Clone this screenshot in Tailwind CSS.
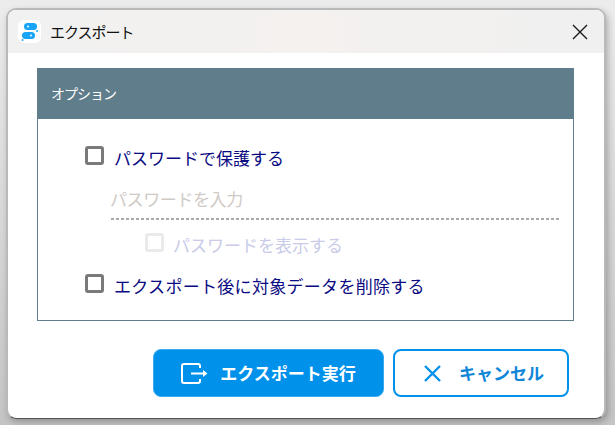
<!DOCTYPE html>
<html lang="ja">
<head>
    <meta charset="UTF-8">
    <title>エクスポート</title>
    <script src="https://cdn.jsdelivr.net/npm/@tailwindcss/browser@4"></script>
</head>
<body class="bg-[#e4e4e4] font-['Noto_Sans_CJK_JP',sans-serif] overflow-hidden">
    <div class="w-[615px] h-[425px] pt-[8px] pl-[6px] bg-gradient-to-b from-[#ececec] to-[#c4c4c4]">
        <div class="w-[600px] h-[411px] flex flex-col bg-white rounded-[10px] overflow-hidden border-2 border-[#b9b9b9] border-b-[#555] border-b-1 shadow-[2px_3px_6px_rgba(0,0,0,0.25)]">
            <header class="h-[43px] shrink-0 flex items-center bg-gradient-to-r from-[#f1f1f1] via-[#f4f1ef] to-[#f0f0f0] pl-[10px] pr-[16px]">
                <div class="w-[23px] h-[23px] rounded-[6px] bg-white flex items-center justify-center">
                    <svg width="17" height="19" viewBox="0 0 17 19">
                        <rect x="3" y="1" width="13" height="7" rx="3.5" fill="#18a5f7"/>
                        <rect x="1" y="10" width="13" height="7" rx="3.5" fill="#18a5f7"/>
                        <circle cx="7" cy="4.5" r="1" fill="#fff"/>
                        <circle cx="10" cy="13.5" r="1" fill="#fff"/>
                        <circle cx="16" cy="9" r="1" fill="#18a5f7"/>
                        <circle cx="1.5" cy="18" r="1" fill="#18a5f7"/>
                    </svg>
                </div>
                <span class="ml-[9px] text-[15px] tracking-[-1px] text-[#111] leading-none">エクスポート</span>
                <svg class="ml-auto" width="16" height="16" viewBox="0 0 16 16">
                    <path d="M1 1 L15 15 M15 1 L1 15" stroke="#1a1a1a" stroke-width="1.4" fill="none"/>
                </svg>
            </header>

            <main class="flex-1 flex flex-col pl-[29px] pr-[29px] pt-[15px]">
                <section class="w-[537px] h-[253px] border border-[#5f7d8b] border-t-0 flex flex-col">
                    <div class="h-[51px] -mx-px bg-[#5f7d8b] text-white text-[14px] tracking-[-1px] flex items-center pl-[14px]">オプション</div>
                    <div class="flex flex-col pl-[47px] pr-[12px] pt-[25px]">
                        <label class="flex items-center h-[28px] text-[17px] text-[#0a0a82]">
                            <span class="w-[19px] h-[19px] mb-[6px] rounded-[3px] border-[3px] border-[#7a7a7a] bg-white"></span>
                            <span class="ml-[10px]">パスワードで保護する</span>
                        </label>
                        <div class="ml-[26px] mt-[12px] h-[30px] flex items-center text-[17px] tracking-[-0.4px] text-[#cfcac6]"><span class="-ml-px">パスワードを入力</span></div>
                        <div class="ml-[26px] mt-[4px] h-[2px] bg-[repeating-linear-gradient(90deg,#aaa_0,#aaa_3px,transparent_3px,transparent_5px)]"></div>
                        <label class="flex items-center h-[28px] mt-[11px] ml-[60px] text-[17px] text-[#c9cbe8]">
                            <span class="w-[19px] h-[19px] mb-[6px] rounded-[3px] border-[3px] border-[#eaeaea] bg-white"></span>
                            <span class="ml-[9px]">パスワードを表示する</span>
                        </label>
                        <label class="flex items-center h-[28px] mt-[13px] text-[17px] text-[#0a0a82]">
                            <span class="w-[19px] h-[19px] mb-[6px] rounded-[3px] border-[3px] border-[#7a7a7a] bg-white"></span>
                            <span class="ml-[10px] tracking-[0.3px]">エクスポート後に対象データを削除する</span>
                        </label>
                    </div>
                </section>

                <div class="flex justify-end gap-[9px] mt-[28px] mr-[6px]">
                    <button class="w-[231px] h-[48px] rounded-[8px] bg-[#0091ea] border border-[#3aa9f0] text-white text-[17px] font-semibold flex items-center justify-center gap-[12px]">
                        <svg width="27" height="21" viewBox="0 0 27 21" fill="none" stroke="#fff" stroke-width="2">
                            <path d="M19 5 V3 Q19 1 17 1 H3 Q1 1 1 3 V18 Q1 20 3 20 H17 Q19 20 19 18 V16"/>
                            <path d="M10 10.5 H24"/>
                            <path d="M22 7 L26.5 10.5 L22 14 Z" fill="#fff" stroke="none"/>
                        </svg>
                        エクスポート実行
                    </button>
                    <button class="w-[176px] h-[48px] pl-[6px] rounded-[8px] bg-white border-2 border-[#0091ea] text-[#0f86d8] text-[17px] font-semibold flex items-center justify-center gap-[18px]">
                        <svg width="17" height="17" viewBox="0 0 17 17" fill="none" stroke="#0091ea" stroke-width="2.4">
                            <path d="M1 1 L16 16 M16 1 L1 16"/>
                        </svg>
                        キャンセル
                    </button>
                </div>
            </main>
        </div>
    </div>
</body>
</html>
